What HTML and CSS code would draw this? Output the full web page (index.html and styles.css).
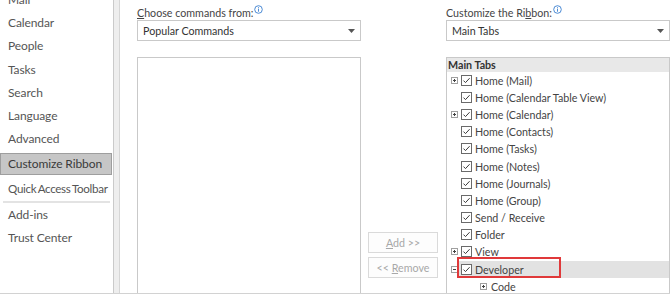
FILE: index.html
```html
<!DOCTYPE html>
<html lang="en">
<head>
<meta charset="utf-8">
<title>Outlook Options - Customize Ribbon</title>
<link rel="stylesheet" href="styles.css">
</head>
<body>
<div class="app">
  <nav class="sidebar">
    <ul class="nav-list">
      <li class="nav-item">Mail</li>
      <li class="nav-item">Calendar</li>
      <li class="nav-item">People</li>
      <li class="nav-item">Tasks</li>
      <li class="nav-item">Search</li>
      <li class="nav-item">Language</li>
      <li class="nav-item">Advanced</li>
      <li class="nav-item nav-selected">Customize Ribbon</li>
      <li class="nav-item nav-long">Quick Access Toolbar</li>
      <li class="nav-sep"></li>
      <li class="nav-item">Add-ins</li>
      <li class="nav-item">Trust Center</li>
    </ul>
  </nav>
  <div class="splitter"></div>
  <main class="content">
    <section class="col">
      <div class="field-label"><span class="ul">C</span>hoose commands from:<svg class="info" viewBox="0 0 9 9" width="9" height="9"><circle cx="4.5" cy="4.5" r="3.8" fill="none" stroke="#3a7fd0" stroke-width="0.9"/><rect x="4.05" y="3.7" width="0.9" height="3" fill="#3a7fd0"/><rect x="4.05" y="2.2" width="0.9" height="0.9" fill="#3a7fd0"/></svg></div>
      <div class="select"><span>Popular Commands</span><svg class="caret" viewBox="0 0 7 4" width="7" height="4"><polygon points="0,0 7,0 3.5,4" fill="#555"/></svg></div>
      <div class="listbox"></div>
    </section>
    <div class="col-mid">
      <button class="btn" disabled><span class="ul">A</span>dd &gt;&gt;</button>
      <button class="btn" disabled>&lt;&lt; <span class="ul">R</span>emove</button>
    </div>
    <section class="col">
      <div class="field-label">Customize the Ri<span class="ul">b</span>bon:<svg class="info" viewBox="0 0 9 9" width="9" height="9"><circle cx="4.5" cy="4.5" r="3.8" fill="none" stroke="#3a7fd0" stroke-width="0.9"/><rect x="4.05" y="3.7" width="0.9" height="3" fill="#3a7fd0"/><rect x="4.05" y="2.2" width="0.9" height="0.9" fill="#3a7fd0"/></svg></div>
      <div class="select"><span>Main Tabs</span><svg class="caret" viewBox="0 0 7 4" width="7" height="4"><polygon points="0,0 7,0 3.5,4" fill="#555"/></svg></div>
      <div class="tree">
        <div class="tree-header">Main Tabs</div>

        <div class="tree-row">
          <svg class="exp" viewBox="0 0 7 7" width="7" height="7"><rect x="0.5" y="0.5" width="6" height="6" fill="#fff" stroke="#a0a0a0"/><path d="M2 3.5H5M3.5 2V5" stroke="#444" stroke-width="1"/></svg>
          <div class="row-body"><svg class="cb" viewBox="0 0 11 11" width="11" height="11"><rect x="0.5" y="0.5" width="10" height="10" fill="#fff" stroke="#6a6a6a"/><path d="M2.5 5.6L4.5 7.6L8.6 3.2" fill="none" stroke="#3a3a3a" stroke-width="1"/></svg><span>Home (Mail)</span></div>
        </div>
        <div class="tree-row">
          <span class="exp"></span>
          <div class="row-body"><svg class="cb" viewBox="0 0 11 11" width="11" height="11"><rect x="0.5" y="0.5" width="10" height="10" fill="#fff" stroke="#6a6a6a"/><path d="M2.5 5.6L4.5 7.6L8.6 3.2" fill="none" stroke="#3a3a3a" stroke-width="1"/></svg><span>Home (Calendar Table View)</span></div>
        </div>
        <div class="tree-row">
          <svg class="exp" viewBox="0 0 7 7" width="7" height="7"><rect x="0.5" y="0.5" width="6" height="6" fill="#fff" stroke="#a0a0a0"/><path d="M2 3.5H5M3.5 2V5" stroke="#444" stroke-width="1"/></svg>
          <div class="row-body"><svg class="cb" viewBox="0 0 11 11" width="11" height="11"><rect x="0.5" y="0.5" width="10" height="10" fill="#fff" stroke="#6a6a6a"/><path d="M2.5 5.6L4.5 7.6L8.6 3.2" fill="none" stroke="#3a3a3a" stroke-width="1"/></svg><span>Home (Calendar)</span></div>
        </div>
        <div class="tree-row">
          <span class="exp"></span>
          <div class="row-body"><svg class="cb" viewBox="0 0 11 11" width="11" height="11"><rect x="0.5" y="0.5" width="10" height="10" fill="#fff" stroke="#6a6a6a"/><path d="M2.5 5.6L4.5 7.6L8.6 3.2" fill="none" stroke="#3a3a3a" stroke-width="1"/></svg><span>Home (Contacts)</span></div>
        </div>
        <div class="tree-row">
          <span class="exp"></span>
          <div class="row-body"><svg class="cb" viewBox="0 0 11 11" width="11" height="11"><rect x="0.5" y="0.5" width="10" height="10" fill="#fff" stroke="#6a6a6a"/><path d="M2.5 5.6L4.5 7.6L8.6 3.2" fill="none" stroke="#3a3a3a" stroke-width="1"/></svg><span>Home (Tasks)</span></div>
        </div>
        <div class="tree-row">
          <span class="exp"></span>
          <div class="row-body"><svg class="cb" viewBox="0 0 11 11" width="11" height="11"><rect x="0.5" y="0.5" width="10" height="10" fill="#fff" stroke="#6a6a6a"/><path d="M2.5 5.6L4.5 7.6L8.6 3.2" fill="none" stroke="#3a3a3a" stroke-width="1"/></svg><span>Home (Notes)</span></div>
        </div>
        <div class="tree-row">
          <span class="exp"></span>
          <div class="row-body"><svg class="cb" viewBox="0 0 11 11" width="11" height="11"><rect x="0.5" y="0.5" width="10" height="10" fill="#fff" stroke="#6a6a6a"/><path d="M2.5 5.6L4.5 7.6L8.6 3.2" fill="none" stroke="#3a3a3a" stroke-width="1"/></svg><span>Home (Journals)</span></div>
        </div>
        <div class="tree-row">
          <span class="exp"></span>
          <div class="row-body"><svg class="cb" viewBox="0 0 11 11" width="11" height="11"><rect x="0.5" y="0.5" width="10" height="10" fill="#fff" stroke="#6a6a6a"/><path d="M2.5 5.6L4.5 7.6L8.6 3.2" fill="none" stroke="#3a3a3a" stroke-width="1"/></svg><span>Home (Group)</span></div>
        </div>
        <div class="tree-row">
          <span class="exp"></span>
          <div class="row-body"><svg class="cb" viewBox="0 0 11 11" width="11" height="11"><rect x="0.5" y="0.5" width="10" height="10" fill="#fff" stroke="#6a6a6a"/><path d="M2.5 5.6L4.5 7.6L8.6 3.2" fill="none" stroke="#3a3a3a" stroke-width="1"/></svg><span>Send / Receive</span></div>
        </div>
        <div class="tree-row">
          <span class="exp"></span>
          <div class="row-body"><svg class="cb" viewBox="0 0 11 11" width="11" height="11"><rect x="0.5" y="0.5" width="10" height="10" fill="#fff" stroke="#6a6a6a"/><path d="M2.5 5.6L4.5 7.6L8.6 3.2" fill="none" stroke="#3a3a3a" stroke-width="1"/></svg><span>Folder</span></div>
        </div>
        <div class="tree-row">
          <svg class="exp" viewBox="0 0 7 7" width="7" height="7"><rect x="0.5" y="0.5" width="6" height="6" fill="#fff" stroke="#a0a0a0"/><path d="M2 3.5H5M3.5 2V5" stroke="#444" stroke-width="1"/></svg>
          <div class="row-body"><svg class="cb" viewBox="0 0 11 11" width="11" height="11"><rect x="0.5" y="0.5" width="10" height="10" fill="#fff" stroke="#6a6a6a"/><path d="M2.5 5.6L4.5 7.6L8.6 3.2" fill="none" stroke="#3a3a3a" stroke-width="1"/></svg><span>View</span></div>
        </div>
        <div class="tree-row">
          <svg class="exp" viewBox="0 0 7 7" width="7" height="7"><rect x="0.5" y="0.5" width="6" height="6" fill="#fff" stroke="#a0a0a0"/><path d="M2 3.5H5" stroke="#444" stroke-width="1"/></svg>
          <div class="row-body row-selected"><svg class="cb" viewBox="0 0 11 11" width="11" height="11"><rect x="0.5" y="0.5" width="10" height="10" fill="#fff" stroke="#6a6a6a"/><path d="M2.5 5.6L4.5 7.6L8.6 3.2" fill="none" stroke="#3a3a3a" stroke-width="1"/></svg><span>Developer</span><span class="callout"></span></div>
        </div>
        <div class="tree-row tree-child">
          <svg class="exp" viewBox="0 0 7 7" width="7" height="7"><rect x="0.5" y="0.5" width="6" height="6" fill="#fff" stroke="#a0a0a0"/><path d="M2 3.5H5M3.5 2V5" stroke="#444" stroke-width="1"/></svg>
          <div class="row-body"><span>Code</span></div>
        </div>
      </div>
    </section>
  </main>
</div>
</body>
</html>
```

FILE: styles.css
```css
* { box-sizing: border-box; }

html, body {
  margin: 0;
  padding: 0;
  background: #ffffff;
}

body {
  font-family: "Lato", "Open Sans", "Liberation Sans", sans-serif;
  font-size: 12px;
  color: #444444;
}

.app {
  display: flex;
  width: 670px;
  height: 294px;
  overflow: hidden;
  border-bottom: 1px solid #d2d2d2;
}

/* ---------- Sidebar ---------- */
.sidebar {
  width: 113px;
  flex: none;
  overflow: hidden;
}

.nav-list {
  list-style: none;
  margin: -12px 0 0 0;
  padding: 0;
}

.nav-item {
  height: 23.2px;
  line-height: 23.2px;
  padding-left: 8px;
  color: #555555;
  letter-spacing: -0.1px;
  white-space: nowrap;
}

.nav-long {
  font-size: 11.6px;
  letter-spacing: -0.3px;
  word-spacing: -1px;
}

.nav-selected {
  width: 112px;
  height: 22px;
  line-height: 20px;
  margin: 2.5px 0;
  padding-left: 7px;
  background: #c6c6c6;
  border: 1px solid #9e9e9e;
  color: #3a3a3a;
}

.nav-sep {
  height: 2px;
  margin: 0 3px;
  background: #e3e3e3;
}

.splitter {
  width: 7px;
  flex: none;
  background: #eeeeee;
  border-left: 1px solid #cacaca;
  border-right: 1px solid #d6d6d6;
}

/* ---------- Main content ---------- */
.content {
  flex: 1;
  display: flex;
  padding-left: 17px;
  min-width: 0;
  font-size: 10.7px;
}

.col {
  width: 224px;
  flex: none;
  padding-top: 5px;
}

.field-label {
  height: 15px;
  line-height: 15px;
  color: #444444;
  white-space: nowrap;
}

.ul { text-decoration: underline; text-underline-offset: 1px; }

.info {
  vertical-align: top;
  margin-left: 1px;
  margin-top: 0;
}

.select {
  height: 21px;
  display: flex;
  align-items: center;
  justify-content: space-between;
  padding: 0 5px 0 5px;
  border: 1px solid #c9c9c9;
  background: #ffffff;
  color: #333333;
}

.caret { flex: none; margin-top: 1px; }

.listbox {
  margin-top: 16px;
  height: 260px;
  border: 1px solid #c9c9c9;
  background: #ffffff;
}

.col-mid {
  width: 85px;
  flex: none;
  display: flex;
  flex-direction: column;
  gap: 4px;
  padding: 232px 8px 0 7px;
}

.btn {
  width: 70px;
  height: 21px;
  padding: 0;
  font-family: inherit;
  font-size: 10.7px;
  color: #a8a8a8;
  background: #fdfdfd;
  border: 1px solid #dadada;
  border-radius: 0;
}

/* ---------- Tree ---------- */
.tree {
  margin-top: 16px;
  height: 260px;
  border: 1px solid #c9c9c9;
  border-bottom: none;
  background: #ffffff;
}

.tree-header {
  height: 13.5px;
  line-height: 14px;
  padding-left: 1px;
  font-weight: 700;
  color: #333333;
  background: #e8e8e8;
}

.tree-row {
  height: 17.2px;
  display: flex;
  align-items: center;
  padding-left: 4px;
  color: #444444;
  white-space: nowrap;
}

.exp {
  width: 7px;
  height: 7px;
  flex: none;
  display: block;
}

.row-body {
  position: relative;
  flex: 1;
  height: 100%;
  display: flex;
  align-items: center;
  padding-left: 3px;
}

.cb {
  flex: none;
  margin-right: 3px;
}

.row-selected {
  background: #e2e2e2;
}

.callout {
  position: absolute;
  left: -1px;
  top: -3.4px;
  width: 104px;
  height: 21px;
  border: 2px solid #e0393a;
}

.tree-child {
  padding-left: 33px;
}

.tree-child .row-body {
  padding-left: 4px;
}
```
